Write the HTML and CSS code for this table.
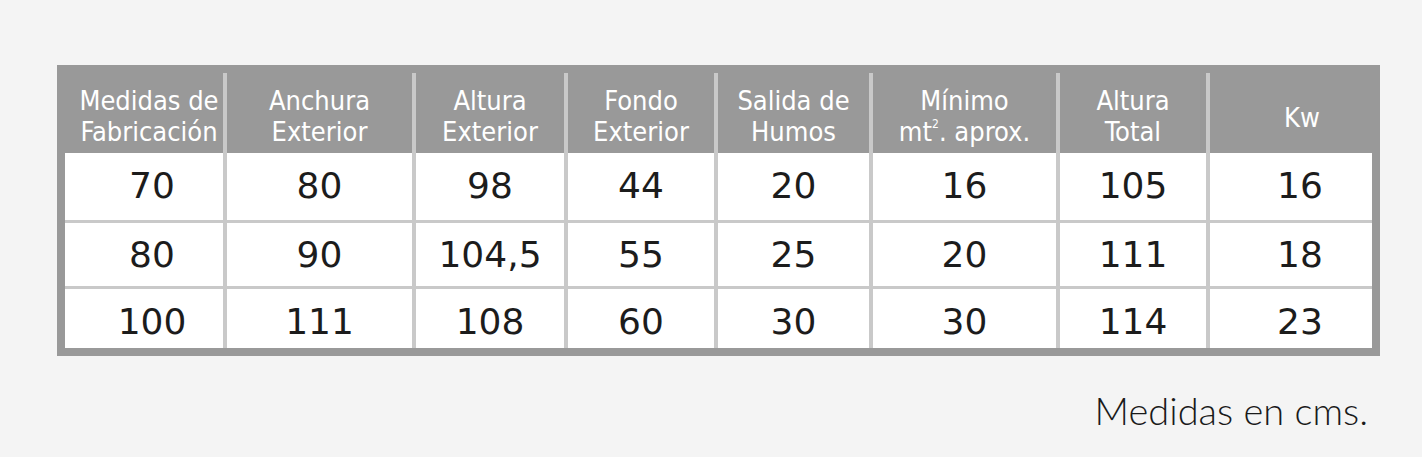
FILE: index.html
```html
<!DOCTYPE html>
<html lang="es">
<head>
<meta charset="utf-8">
<title>Medidas</title>
<link rel="stylesheet" href="styles.css">
</head>
<body>
<div class="page">
  <div class="table">
    <div class="row head">
      <div class="cell c1"><span>Medidas de<br>Fabricación</span></div>
      <div class="cell"><span>Anchura<br>Exterior</span></div>
      <div class="cell"><span>Altura<br>Exterior</span></div>
      <div class="cell"><span>Fondo<br>Exterior</span></div>
      <div class="cell"><span>Salida de<br>Humos</span></div>
      <div class="cell"><span>Mínimo<br>mt<sup>2</sup>. aprox.</span></div>
      <div class="cell"><span>Altura<br>Total</span></div>
      <div class="cell c8"><span>Kw</span></div>
    </div>
    <div class="body">
      <div class="row r1">
        <div class="cell c1">70</div><div class="cell">80</div><div class="cell">98</div><div class="cell">44</div><div class="cell">20</div><div class="cell">16</div><div class="cell">105</div><div class="cell c8">16</div>
      </div>
      <div class="row r2">
        <div class="cell c1">80</div><div class="cell">90</div><div class="cell">104,5</div><div class="cell">55</div><div class="cell">25</div><div class="cell">20</div><div class="cell">111</div><div class="cell c8">18</div>
      </div>
      <div class="row r3">
        <div class="cell c1">100</div><div class="cell">111</div><div class="cell">108</div><div class="cell">60</div><div class="cell">30</div><div class="cell">30</div><div class="cell">114</div><div class="cell c8">23</div>
      </div>
    </div>
  </div>
  <p class="note">Medidas en cms.</p>
</div>
</body>
</html>
```
FILE: styles.css
```css
html, body {
  margin: 0;
  padding: 0;
  background: #f4f4f4;
}
.page {
  padding: 65px 0 0 57px;
  width: 1323px;
}
.table {
  border: 8px solid #999999;
  background: #c9c9c9;
  display: flex;
  flex-direction: column;
}
.row {
  display: grid;
  grid-template-columns: 158px 185px 148px 146px 151px 183px 146px 162px;
  column-gap: 4px;
}
.head .cell {
  background: #999999;
  color: #ffffff;
  font-family: "DejaVu Sans Condensed", "DejaVu Sans", sans-serif;
  font-stretch: condensed;
  font-size: 27px;
  line-height: 31px;
  height: 80px;
  box-sizing: border-box;
  padding-top: 5px;
  display: flex;
  align-items: center;
  justify-content: center;
  text-align: center;
  white-space: nowrap;
}
.head .cell sup {
  font-size: 12px;
  line-height: 0;
  vertical-align: 13px;
}
.head .c1 { padding-left: 10px; }
.head .c8 { padding-left: 22px; padding-top: 8px; }
.body {
  display: flex;
  flex-direction: column;
  row-gap: 3px;
}
.body .cell {
  background: #ffffff;
  color: #1c1c1c;
  font-family: "DejaVu Sans", sans-serif;
  font-size: 36px;
  line-height: 40px;
  text-align: center;
  box-sizing: border-box;
  padding-top: 13px;
}
.r1 .cell { height: 67px; }
.r2 .cell { height: 63px; padding-top: 12px; }
.r3 .cell { height: 59px; padding-top: 13px; }
.body .c1 { padding-left: 16px; }
.body .c8 { padding-left: 18px; }
.note {
  margin: 34px 12px 0 0;
  text-align: right;
  font-family: "Lato", sans-serif;
  font-weight: 300;
  font-size: 38px;
  line-height: 40px;
  color: #1a1a1a;
}
```
